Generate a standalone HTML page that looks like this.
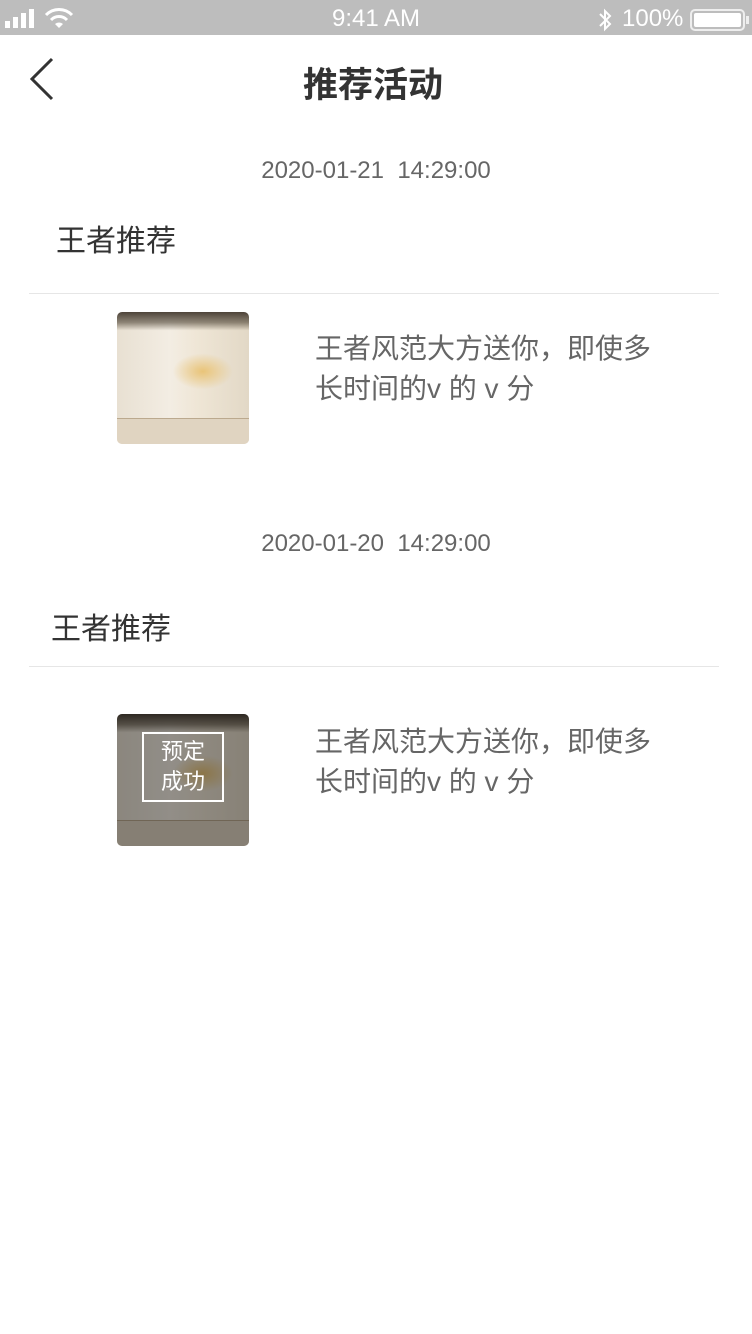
<!DOCTYPE html>
<html><head><meta charset="utf-8"><style>
*{margin:0;padding:0;box-sizing:border-box}
body{width:752px;height:1334px;background:#fff;position:relative;overflow:hidden;font-family:"Liberation Sans","Noto Sans CJK SC",sans-serif;color:#333}
.sb{position:absolute;left:0;top:0;width:752px;height:35px;background:#bdbdbd;color:#fff}
.abs{position:absolute}
.img{position:absolute;width:132px;height:132px;border-radius:5px;overflow:hidden;
background:
linear-gradient(180deg,rgba(60,50,40,.9) 0,rgba(80,70,55,.6) 8%,transparent 14%),
radial-gradient(ellipse 30px 18px at 65% 45%,#e9c478 0,transparent 100%),
linear-gradient(90deg,#e8e0d2 0,#f3ede3 40%,#efe6d6 60%,#e2d8c6 100%)}
.img .drw{position:absolute;left:0;right:0;bottom:0;height:26px;border-top:1px solid #bba98e;background:#e0d4c1}
.line{position:absolute;left:29px;width:690px;height:1px;background:#e6e6e6}
.date{position:absolute;width:752px;text-align:center;font-size:24px;color:#666}
.title{position:absolute;font-size:30px;color:#333}
.desc{position:absolute;left:315px;font-size:28px;line-height:40px;color:#666}
</style></head><body>
<div class="sb">
 <svg class="abs" style="left:4px;top:9px" width="36" height="20"><rect x="1" y="12" width="5" height="7" fill="#fff"/><rect x="9" y="8" width="5" height="11" fill="#fff"/><rect x="17" y="4" width="5" height="15" fill="#fff"/><rect x="25" y="0" width="5" height="19" fill="#fff"/></svg>
 <svg class="abs" style="left:44px;top:7px" width="30" height="22"><path d="M2 8 A18 18 0 0 1 28 8" stroke="#fff" stroke-width="3" fill="none"/><path d="M7 13 A11 11 0 0 1 23 13" stroke="#fff" stroke-width="3" fill="none"/><path d="M11 17 L15 21 L19 17 A6 6 0 0 0 11 17Z" fill="#fff"/></svg>
 <div class="abs" style="left:0;width:752px;text-align:center;top:5px;font-size:24px">9:41 AM</div>
 <svg class="abs" style="left:597px;top:8px" width="16" height="24"><path d="M3 6 L13 16 L8 21 L8 3 L13 8 L3 18" stroke="#fff" stroke-width="2" fill="none"/></svg>
 <div class="abs" style="left:622px;top:5px;font-size:24px">100%</div>
 <div class="abs" style="left:690px;top:9px;width:55px;height:22px;border:2px solid #eee;border-radius:5px;padding:2px"><div style="background:#fff;width:100%;height:100%;border-radius:2px"></div></div>
 <div class="abs" style="left:746px;top:16px;width:3px;height:8px;background:#eee"></div>
</div>
<svg class="abs" style="left:26px;top:56px" width="32" height="46"><path d="M26 3 L6 23 L26 43" stroke="#333" stroke-width="3" fill="none"/></svg>
<div class="abs" style="left:0;width:746px;text-align:center;top:57px;font-size:35px;font-weight:bold;color:#333">推荐活动</div>

<div class="date" style="top:157px">2020-01-21&nbsp; 14:29:00</div>
<div class="title" style="left:56px;top:216px">王者推荐</div>
<div class="line" style="top:293px"></div>
<div class="img" style="left:117px;top:312px"><div class="drw"></div></div>
<div class="desc" style="top:329px">王者风范大方送你，即使多<br>长时间的v 的 v 分</div>

<div class="date" style="top:530px">2020-01-20&nbsp; 14:29:00</div>
<div class="title" style="left:51px;top:604px">王者推荐</div>
<div class="line" style="top:666px"></div>
<div class="img" style="left:117px;top:714px"><div class="drw"></div><div style="position:absolute;inset:0;background:rgba(0,0,0,.4)"></div>
 <div style="position:absolute;left:25px;top:18px;width:82px;height:70px;border:2px solid #fff;color:#fff;font-size:22px;line-height:30px;text-align:center;padding-top:3px">预定<br>成功</div></div>
<div class="desc" style="top:722px">王者风范大方送你，即使多<br>长时间的v 的 v 分</div>
</body></html>
